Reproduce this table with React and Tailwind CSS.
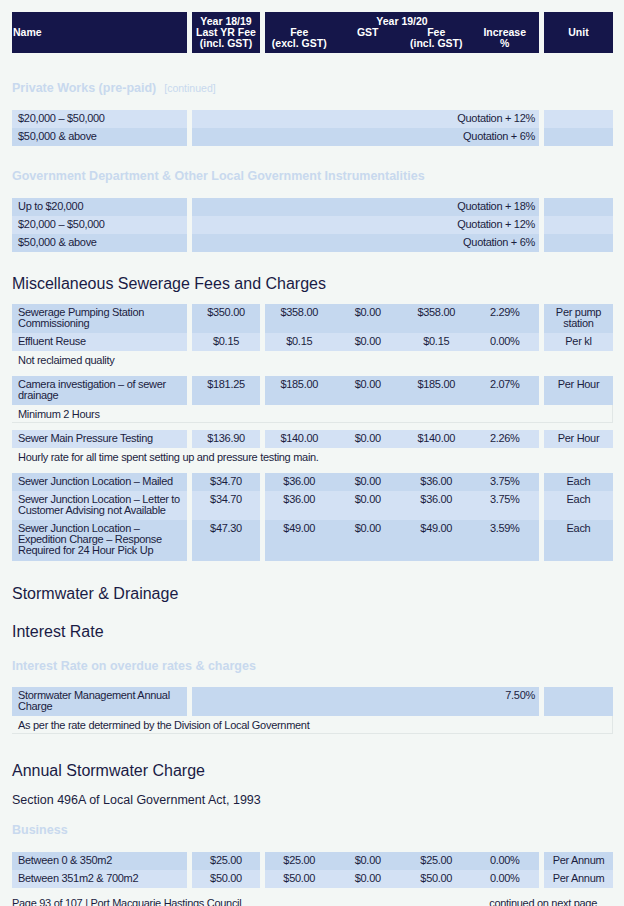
import React from 'react';

// fee schedule page – sewerage and stormwater

const DARK = 'bg-[#c5d8ef]';
const LIGHT = 'bg-[#d3e1f4]';

const cols = 'grid grid-cols-[175px_68px_274px_69px] gap-x-[5px]';
const cell = 'pt-[3px] pb-[4px] text-[11px] leading-[11px] tracking-[-0.3px] whitespace-nowrap';

function Lines({ text }) {
    const parts = Array.isArray(text) ? text : [text];
    return parts.map((p, i) => <div key={i}>{p}</div>);
}

function FeeRow({ name, last, fee, gst, incl, inc, unit, dark, tall }) {
    const bg = dark ? DARK : LIGHT;
    return (
        <div className={`${cols} ${tall ? 'min-h-[41px]' : ''}`}>
            <div className={`${bg} ${cell} pl-[6px]`}><Lines text={name} /></div>
            <div className={`${bg} ${cell} text-center`}>{last}</div>
            <div className={`${bg} grid grid-cols-4`}>
                <div className={`${cell} text-center`}>{fee}</div>
                <div className={`${cell} text-center`}>{gst}</div>
                <div className={`${cell} text-center`}>{incl}</div>
                <div className={`${cell} text-center`}>{inc}</div>
            </div>
            <div className={`${bg} ${cell} text-center`}><Lines text={unit} /></div>
        </div>
    );
}

function QuoteRow({ name, value, dark }) {
    const bg = dark ? DARK : LIGHT;
    return (
        <div className={cols}>
            <div className={`${bg} ${cell} pl-[6px]`}><Lines text={name} /></div>
            <div className={`${bg} ${cell} col-span-2 text-right pr-[4px]`}>{value}</div>
            <div className={bg}></div>
        </div>
    );
}

function Note({ children, bordered }) {
    return (
        <div className={`w-[601px] h-[18px] pl-[6px] pt-[4px] text-[11px] leading-[11px] tracking-[-0.3px] mb-[7px] ${bordered ? 'border-r border-b border-[#e1e7e6]' : ''}`}>
            {children}
        </div>
    );
}

function SubHeading({ children }) {
    return <div className="text-[12.5px] leading-[16px] font-bold text-[#c8d9ee]">{children}</div>;
}

function Heading({ children }) {
    return <div className="text-[16px] leading-[20px] text-[#1a1b45]">{children}</div>;
}

export default function App() {
    return (
        <div className="min-h-[906px] w-[624px] overflow-hidden bg-[#f3f7f5] pl-[12px] pt-[12px] text-[#1b1d3f]" style={{ fontFamily: '"Liberation Sans", Arial, sans-serif' }}>
            {/* table header */}
            <div className={`${cols} h-[41px] text-white font-bold text-[10.5px] leading-[11px]`}>
                <div className="bg-[#15164a] flex items-center pl-px">Name</div>
                <div className="bg-[#15164a] flex flex-col items-center justify-center text-center">
                    <div>Year 18/19</div>
                    <div>Last YR Fee</div>
                    <div>(incl. GST)</div>
                </div>
                <div className="bg-[#15164a] flex flex-col justify-center">
                    <div className="text-center">Year 19/20</div>
                    <div className="grid grid-cols-4 text-center">
                        <div>Fee<br />(excl. GST)</div>
                        <div>GST</div>
                        <div>Fee<br />(incl. GST)</div>
                        <div>Increase<br />%</div>
                    </div>
                </div>
                <div className="bg-[#15164a] flex items-center justify-center">Unit</div>
            </div>

            <div className="mt-[27px] flex items-baseline gap-[8px]">
                <SubHeading>Private Works (pre-paid)</SubHeading>
                <span className="text-[10.5px] text-[#c8d9ee]">[continued]</span>
            </div>
            <div className="mt-[13px]">
                <QuoteRow name="$20,000 – $50,000" value="Quotation + 12%" />
                <QuoteRow name="$50,000 & above" value="Quotation + 6%" dark />
            </div>

            <div className="mt-[22px]">
                <SubHeading>Government Department &amp; Other Local Government Instrumentalities</SubHeading>
            </div>
            <div className="mt-[14px]">
                <QuoteRow name="Up to $20,000" value="Quotation + 18%" dark />
                <QuoteRow name="$20,000 – $50,000" value="Quotation + 12%" />
                <QuoteRow name="$50,000 & above" value="Quotation + 6%" dark />
            </div>

            <div className="mt-[22px]">
                <Heading>Miscellaneous Sewerage Fees and Charges</Heading>
            </div>
            <div className="mt-[10px]">
                <FeeRow name={['Sewerage Pumping Station', 'Commissioning']} last="$350.00" fee="$358.00" gst="$0.00" incl="$358.00" inc="2.29%" unit={['Per pump', 'station']} dark />
                <FeeRow name="Effluent Reuse" last="$0.15" fee="$0.15" gst="$0.00" incl="$0.15" inc="0.00%" unit="Per kl" />
                <Note>Not reclaimed quality</Note>
                <FeeRow name={['Camera investigation – of sewer', 'drainage']} last="$181.25" fee="$185.00" gst="$0.00" incl="$185.00" inc="2.07%" unit="Per Hour" dark />
                <Note bordered>Minimum 2 Hours</Note>
                <FeeRow name="Sewer Main Pressure Testing" last="$136.90" fee="$140.00" gst="$0.00" incl="$140.00" inc="2.26%" unit="Per Hour" />
                <Note>Hourly rate for all time spent setting up and pressure testing main.</Note>
                <FeeRow name="Sewer Junction Location – Mailed" last="$34.70" fee="$36.00" gst="$0.00" incl="$36.00" inc="3.75%" unit="Each" dark />
                <FeeRow name={['Sewer Junction Location – Letter to', 'Customer Advising not Available']} last="$34.70" fee="$36.00" gst="$0.00" incl="$36.00" inc="3.75%" unit="Each" />
                <FeeRow name={['Sewer Junction Location –', 'Expedition Charge – Response', 'Required for 24 Hour Pick Up']} last="$47.30" fee="$49.00" gst="$0.00" incl="$49.00" inc="3.59%" unit="Each" dark tall />
            </div>

            <div className="mt-[23px]">
                <Heading>Stormwater &amp; Drainage</Heading>
            </div>
            <div className="mt-[18px]">
                <Heading>Interest Rate</Heading>
            </div>
            <div className="mt-[16px]">
                <SubHeading>Interest Rate on overdue rates &amp; charges</SubHeading>
            </div>
            <div className="mt-[13px]">
                <QuoteRow name={['Stormwater Management Annual', 'Charge']} value="7.50%" dark />
                <Note bordered>As per the rate determined by the Division of Local Government</Note>
            </div>

            <div className="mt-[27px]">
                <Heading>Annual Stormwater Charge</Heading>
            </div>
            <div className="mt-[10px] text-[12.5px] leading-[18px]">Section 496A of Local Government Act, 1993</div>
            <div className="mt-[13px]">
                <SubHeading>Business</SubHeading>
            </div>
            <div className="mt-[14px]">
                <FeeRow name="Between 0 & 350m2" last="$25.00" fee="$25.00" gst="$0.00" incl="$25.00" inc="0.00%" unit="Per Annum" dark />
                <FeeRow name="Between 351m2 & 700m2" last="$50.00" fee="$50.00" gst="$0.00" incl="$50.00" inc="0.00%" unit="Per Annum" />
            </div>

            <div className="mt-[8px] w-[601px] flex justify-between text-[11px] leading-[14px] tracking-[-0.3px]">
                <span>Page 93 of 107 | Port Macquarie Hastings Council</span>
                <span className="pr-[16px]">continued on next page</span>
            </div>
        </div>
    );
}
